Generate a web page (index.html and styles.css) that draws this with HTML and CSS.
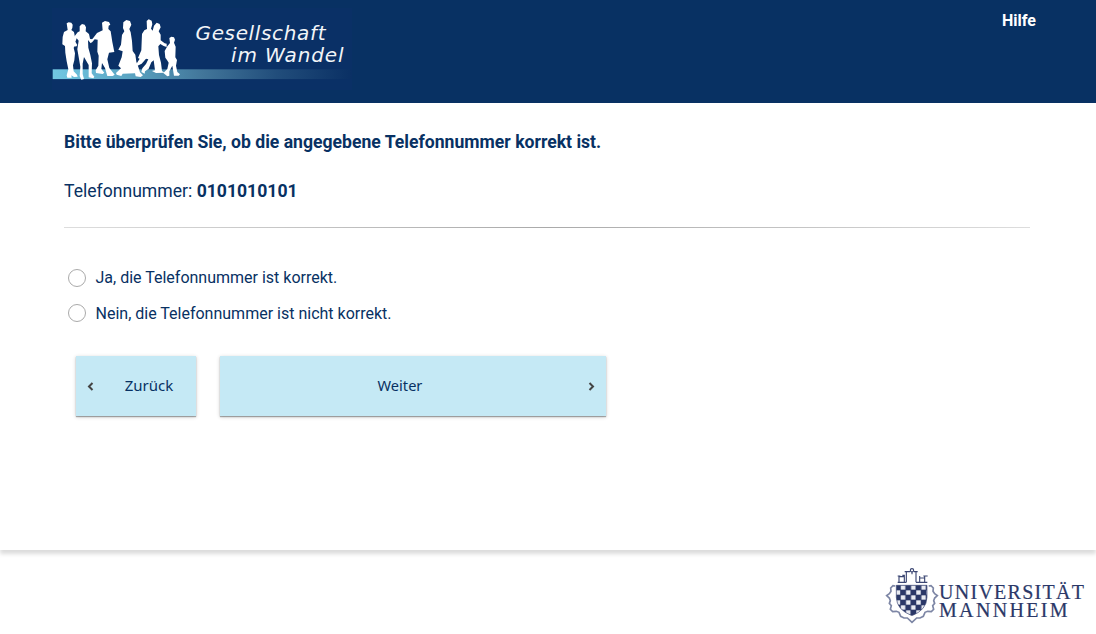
FILE: index.html
```html
<!DOCTYPE html>
<html lang="de">
<head>
<meta charset="utf-8">
<title>Gesellschaft im Wandel</title>
<link rel="stylesheet" href="styles.css">
</head>
<body>
<header class="header">
  <svg class="brand" viewBox="52 8 300 82" role="img" aria-label="Gesellschaft im Wandel">
    <defs>
      <linearGradient id="bar" x1="0" x2="1" y1="0" y2="0">
        <stop offset="0" stop-color="#72c8e2"/>
        <stop offset=".25" stop-color="#5ba5c3"/>
        <stop offset=".5" stop-color="#42769a"/>
        <stop offset=".75" stop-color="#214d7b"/>
        <stop offset="1" stop-color="#0a3064"/>
      </linearGradient>
    </defs>
    <rect x="52" y="8" width="300" height="82" fill="#0a3066"/>
    <rect x="52.7" y="69.3" width="299" height="9.8" fill="url(#bar)"/>
    <g transform="translate(40 0) scale(.33333)" fill="#fff">
      <path d="M80 70 86 67 94 68 98 74 97 84 94 90 102 96 105 112 104 123 109 132 101 143 105 160 103 181 99 196 101 214 111 224 113 230 102 231 94 226 95 233 82 233 80 226 85 208 80 184 76 158 75 138 67 133 68 111 72 96 83 90Z"/>
      <path d="M119 79 126 72 134 74 138 82 137 94 147 102 150 116 158 120 152 130 144 120 145 143 151 165 156 190 155 220 163 230 160 235 146 232 146 195 132 171 128 191 128 222 132 237 124 239 119 228 121 200 116 171 112 148 116 122 110 115 106 126 112 135 108 140 99 134 102 111 113 97 119 94Z"/>
      <path d="M186 68 195 63 207 66 211 74 206 77 205 87 212 94 217 126 223 156 207 158 202 178 208 204 224 224 218 228 202 228 195 204 186 189 184 207 193 218 188 222 168 219 167 211 175 197 176 167 172 155 173 119 164 118 155 128 147 121 158 116 171 99 188 91Z"/>
      <path d="M250 67 259 60 270 63 274 74 268 87 272 97 276 123 278 153 286 164 289 185 295 201 300 217 309 226 302 231 287 229 285 220 248 221 244 228 230 224 228 219 243 205 235 197 245 172 248 154 235 149 243 134 246 105 253 94 249 84Z"/>
      <path d="M320 63 326 58 335 62 337 73 333 86 338 92 342 77 350 68 359 72 362 82 356 94 362 104 362 121 374 130 380 131 380 141 371 138 361 132 355 139 357 165 363 188 366 213 374 218 348 219 336 213 345 211 341 181 334 187 326 206 315 214 314 221 304 216 307 205 318 192 325 178 318 176 305 191 291 198 291 189 299 176 294 174 304 151 306 102 313 91 321 87Z"/>
      <path d="M388 114 394 110 402 112 405 119 402 128 407 140 406 172 411 180 408 197 412 216 420 223 416 227 402 227 397 197 388 214 388 227 382 229 370 219 382 207 386 188 381 180 376 173 374 153 382 139 390 129Z"/>
    </g>
    <text class="brand-text" x="195.5" y="39.5" textLength="130" lengthAdjust="spacing">Gesellschaft</text>
    <text class="brand-text" x="231" y="62" textLength="112.5" lengthAdjust="spacing">im Wandel</text>
  </svg>
  <a class="help">Hilfe</a>
</header>
<main class="content">
  <h1 class="question">Bitte überprüfen Sie, ob die angegebene Telefonnummer korrekt ist.</h1>
  <p class="phone">Telefonnummer: <b>0101010101</b></p>
  <div class="divider"></div>
  <div class="options">
    <label class="option"><input class="radio" type="radio" name="ok"><span>Ja, die Telefonnummer ist korrekt.</span></label>
    <label class="option second"><input class="radio" type="radio" name="ok"><span>Nein, die Telefonnummer ist nicht korrekt.</span></label>
  </div>
  <div class="buttons">
    <button class="btn back"><svg class="chevron" viewBox="0 0 7 9"><path d="M5.5 1 2 4.5 5.5 8"/></svg><span>Zurück</span></button>
    <button class="btn next"><span>Weiter</span><svg class="chevron" viewBox="0 0 7 9"><path d="M1.5 1 5 4.5 1.5 8"/></svg></button>
  </div>
</main>
<footer class="footer">
  <svg class="uni" viewBox="884 564 204 62" role="img" aria-label="Universität Mannheim">
    <defs>
      <pattern id="check" x="46.5" y="75" width="30.8" height="30" patternUnits="userSpaceOnUse">
        <rect width="30.8" height="30" fill="#2b3868"/>
        <rect x="16" y="1" width="13.4" height="13" fill="#e9ebf2"/>
        <rect x=".7" y="16" width="13.4" height="13" fill="#e9ebf2"/>
      </pattern>
    </defs>
    <g transform="translate(880 560) scale(.33333)" fill="none" stroke="#3b4672" stroke-width="3.4">
      <path stroke-width="2" d="M49 76H141V112Q140 150 96 167Q50 150 49 112Z" fill="url(#check)"/>
      <path d="M57 68V48M53 48H61M73 52V46H67M73 66V50H57M53 67H79M79 67V35M74 35H84M79 35H90M102 35H113M108 35V67M108 67H142M134 67V48M130 48H143M134 54H119V66M119 48V54M96 35V43"/>
      <circle cx="96" cy="31" r="5"/>
      <path stroke="#7d86a5" stroke-width="5" d="M46 78 39 77 32 84 33 94 28 101 20 107 28 114 31 122 28 130 34 137 31 148 38 155 49 154 57 157 62 169 72 174 82 174 96 187 110 174 120 174 130 169 135 157 143 154 154 155 161 148 158 137 164 130 161 122 164 114 172 107 164 101 159 94 160 84 153 77 146 78"/>
    </g>
    <text class="uni-text" x="939" y="599" textLength="145" lengthAdjust="spacing">UNIVERSITÄT</text>
    <text class="uni-text" x="939" y="616.5" textLength="128.5" lengthAdjust="spacing">MANNHEIM</text>
  </svg>
</footer>
</body>
</html>
```
FILE: styles.css
```css
* { box-sizing: border-box; }
body {
  margin: 0;
  height: 634px;
  display: flex;
  flex-direction: column;
  overflow: hidden;
  background: #fff;
  color: #083163;
  font-family: Roboto, sans-serif;
}
.header {
  height: 103px;
  padding: 8px 60px 0 52px;
  display: flex;
  justify-content: space-between;
  align-items: flex-start;
  background: #083163;
}
.brand { width: 300px; height: 82px; }
.brand-text {
  font: italic 20px "DejaVu Sans", sans-serif;
  fill: #f2f5f8;
}
.help {
  margin-top: 3px;
  color: #fff;
  font-size: 16px;
  font-weight: 700;
  line-height: 20px;
}
.content {
  height: 447px;
  padding: 27px 66px 0 64px;
  box-shadow: 0 4px 4px rgba(0, 0, 0, .14);
  clip-path: inset(0 0 -12px 0);
}
.question {
  margin: 0;
  font-size: 17.6px;
  font-weight: 700;
  line-height: 24px;
}
.phone {
  margin: 25px 0 0;
  font-size: 17.6px;
  line-height: 24px;
}
.divider {
  height: 1px;
  margin-top: 24px;
  background: linear-gradient(90deg, #ddd, #aaa 50%, #ddd);
}
.options {
  padding: 38px 0 0 4px;
  display: flex;
  flex-direction: column;
  gap: 11px;
}
.option {
  height: 24px;
  display: flex;
  align-items: center;
  gap: 9.5px;
  font-size: 16px;
}
.option span { padding-bottom: 1px; }
.second span { padding: 1px 0 0; }
.radio {
  appearance: none;
  width: 18px;
  height: 18px;
  margin: 0;
  border: 1px solid #aaa;
  border-radius: 50%;
  background: #fff;
}
.buttons {
  padding: 31px 0 0 12px;
  display: flex;
  gap: 24px;
}
.btn {
  height: 60px;
  padding: 0 11px;
  display: flex;
  align-items: center;
  border: 0;
  background: #c5e9f5;
  color: #083163;
  font: 15px "Noto Sans", sans-serif;
  box-shadow: 0 1px 4px rgba(0, 0, 0, .2), 0 1px 1px rgba(0, 0, 0, .3);
}
.btn span { flex: 1; padding-bottom: 2px; text-align: center; }
.back { width: 120px; }
.back span { padding-left: 19px; }
.next { width: 386px; }
.next span { padding-right: 19px; font-size: 14.6px; }
.chevron {
  width: 7px;
  height: 9px;
  fill: none;
  stroke: #444;
  stroke-width: 2;
}
.footer {
  height: 84px;
  padding: 14px 8px 0 0;
  display: flex;
  justify-content: flex-end;
  align-items: flex-start;
}
.uni { width: 204px; height: 62px; }
.uni-text {
  font: 20px "Liberation Serif", serif;
  fill: #2b3868;
  stroke: #2b3868;
  stroke-width: .2px;
}
```
